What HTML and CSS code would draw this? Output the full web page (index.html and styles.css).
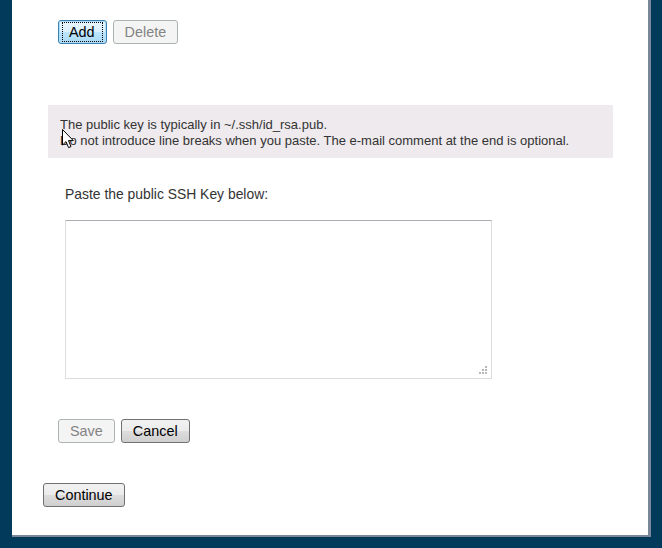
FILE: index.html
```html
<!DOCTYPE html>
<html>
<head>
<meta charset="utf-8">
<link rel="stylesheet" href="styles.css">
</head>
<body>
<div class="frame">
  <div class="panel">
    <div class="btn-row top-row">
      <button class="btn focused"><span class="focus-ring">Add</span></button>
      <button class="btn" disabled>Delete</button>
    </div>
    <div class="info">
      <p>The public key is typically in ~/.ssh/id_rsa.pub.</p>
      <p>Do not introduce line breaks when you paste. The e-mail comment at the end is optional.</p>
      <svg class="cursor" width="13" height="20" viewBox="0 0 13 20"><path d="M0.5 0.5 L0.5 16 L4 12.6 L6.6 18.6 L9 17.6 L6.5 11.6 L11.3 11.6 Z" fill="#fff" stroke="#000" stroke-width="1" stroke-linejoin="miter"/></svg>
    </div>
    <div class="form">
      <label class="label" for="key">Paste the public SSH Key below:</label>
      <div class="keywrap">
        <textarea id="key" class="keybox"></textarea>
        <svg class="grip" width="9" height="9" viewBox="0 0 9 9">
          <g fill="#b8b8b8">
            <rect x="6" y="0" width="2" height="2"/>
            <rect x="3" y="3" width="2" height="2"/>
            <rect x="6" y="3" width="2" height="2"/>
            <rect x="0" y="6" width="2" height="2"/>
            <rect x="3" y="6" width="2" height="2"/>
            <rect x="6" y="6" width="2" height="2"/>
          </g>
        </svg>
      </div>
      <div class="btn-row save-row">
        <button class="btn" disabled>Save</button>
        <button class="btn">Cancel</button>
      </div>
    </div>
    <div class="continue-row">
      <button class="btn">Continue</button>
    </div>
  </div>
</div>
</body>
</html>
```
FILE: styles.css
```css
html, body {
  margin: 0;
  padding: 0;
  background: #023a5b;
  height: 548px;
  overflow: hidden;
}
.frame {
  padding: 0 11px 11px 12px;
}
.panel {
  background: #ffffff;
  width: 636px;
  height: 535px;
  border-right: 3px solid #7a8799;
  border-bottom: 2px solid #7a8799;
  box-sizing: content-box;
  font-family: "Liberation Sans", Arial, sans-serif;
  color: #333333;
  display: flex;
  flex-direction: column;
}
.btn-row {
  display: flex;
  gap: 6px;
}
.top-row {
  margin: 20px 0 0 46px;
}
.btn {
  height: 24px;
  padding: 0 11px;
  font-family: "Liberation Sans", Arial, sans-serif;
  font-size: 14.4px;
  color: #000000;
  border: 1px solid #707070;
  border-radius: 3px;
  background: linear-gradient(to bottom, #f2f2f2 0%, #ebebeb 50%, #dddddd 51%, #cfcfcf 100%);
  margin: 0;
  line-height: 20px;
}
.btn:disabled {
  color: #838383;
  border-color: #adb2b5;
  background: #f4f4f4;
}
.btn.focused {
  border-color: #3c7fb1;
  background: linear-gradient(to bottom, #eaf6fd 0%, #d9f0fc 50%, #bee6fd 51%, #a7d9f5 100%);
  padding: 0 3px;
  box-shadow: inset 0 0 0 1px #aee0fb;
}
.focus-ring {
  display: inline-block;
  border: 1px dotted #000;
  padding: 0 7px 0 6px;
  line-height: 18px;
}
.info {
  position: relative;
  margin: 61px 0 0 36px;
  width: 565px;
  height: 53px;
  box-sizing: border-box;
  background: #eeeaed;
  padding: 12px 0 0 12px;
  font-size: 13px;
  line-height: 16px;
}
.info p {
  margin: 0;
}
.cursor {
  position: absolute;
  left: 14px;
  top: 24px;
}
.form {
  display: flex;
  flex-direction: column;
  align-items: flex-start;
  padding-left: 53px;
}
.label {
  font-size: 13.9px;
  line-height: 16px;
  margin-top: 28px;
}
.keywrap {
  position: relative;
  margin-top: 18px;
}
.keybox {
  display: block;
  margin: 0;
  width: 427px;
  height: 159px;
  box-sizing: border-box;
  border: 1px solid #dcdcdc;
  border-top-color: #abadb3;
  resize: none;
  padding: 2px;
}
.grip {
  position: absolute;
  right: 4px;
  bottom: 4px;
}
.save-row {
  margin: 40px 0 0 -7px;
}
.continue-row {
  margin: 40px 0 0 31px;
}
```
